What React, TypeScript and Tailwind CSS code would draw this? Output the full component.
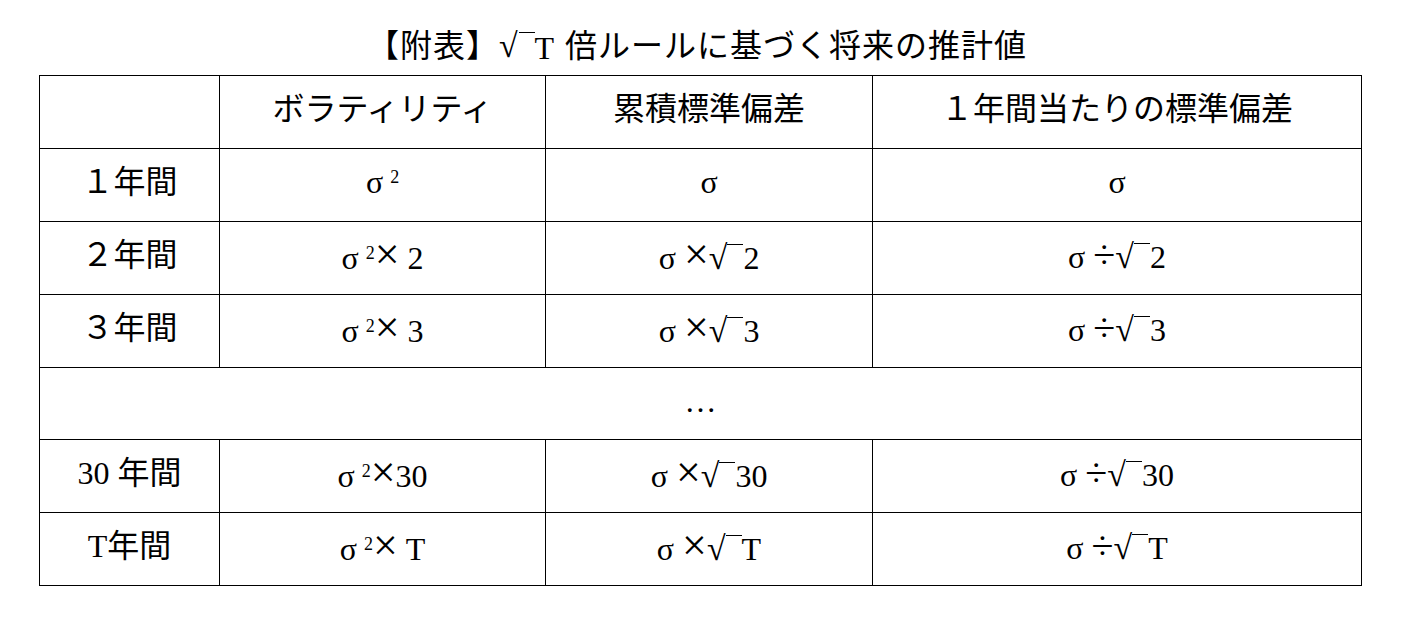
import React from "react";

const font = { fontFamily: '"Liberation Serif", "Noto Sans CJK JP", serif' };

function Sq({ children }: { children: React.ReactNode }) {
    return (
        <span className="inline-flex items-start">
            <span className="text-[34px] leading-[36px]">√</span>
            <span className="inline-block w-[16px] border-t-[1.5px] border-black mt-[4px] h-[20px]"></span>
            <span>{children}</span>
        </span>
    );
}

function S2() {
    return (
        <span>
            σ<span className="text-[18px] leading-none ml-[7px] align-[10px]">2</span>
        </span>
    );
}

// full-width looking operators
const Times = () => <span className="text-[44px] leading-none">×</span>;
const Div = () => <span className="text-[40px] leading-none">÷</span>;

const rows: { label: string; vol: React.ReactNode; cum: React.ReactNode; per: React.ReactNode }[] = [
    { label: "１年間", vol: <S2 />, cum: "σ", per: "σ" },
    { label: "２年間", vol: <><S2 /><Times /> 2</>, cum: <>σ <Times /><Sq>2</Sq></>, per: <>σ <Div /><Sq>2</Sq></> },
    { label: "３年間", vol: <><S2 /><Times /> 3</>, cum: <>σ <Times /><Sq>3</Sq></>, per: <>σ <Div /><Sq>3</Sq></> },
];

const rows2: typeof rows = [
    { label: "30 年間", vol: <><S2 /><Times />30</>, cum: <>σ <Times /><Sq>30</Sq></>, per: <>σ <Div /><Sq>30</Sq></> },
    { label: "T年間", vol: <><S2 /><Times /> T</>, cum: <>σ <Times /><Sq>T</Sq></>, per: <>σ <Div /><Sq>T</Sq></> },
];

export default function App() {
    const td = "border-[1.5px] border-black text-center align-middle pb-[6px]";
    const renderRow = (r: (typeof rows)[number], i: number) => (
        <tr key={i} className="h-[73px]">
            <td className={td}>{r.label}</td>
            <td className={td}>{r.vol}</td>
            <td className={td}>{r.cum}</td>
            <td className={td}>{r.per}</td>
        </tr>
    );

    return (
        <div className="w-[1408px] h-[622px] bg-white text-black pt-[26px]" style={font}>
            <h1 className="text-center text-[32px] leading-[40px] tracking-[1px] pr-[14px] mb-[7px]">
                【附表】<Sq><span className="mr-[10px]">T</span></Sq>倍ルールに基づく将来の推計値
            </h1>
            <table className="ml-[39px] w-[1322px] border-collapse table-fixed text-[32px] leading-[36px]">
                <colgroup>
                    <col className="w-[180px]" />
                    <col className="w-[326px]" />
                    <col className="w-[327px]" />
                    <col className="w-[489px]" />
                </colgroup>
                <tbody>
                    <tr className="h-[73px]">
                        <td className={td}></td>
                        <td className={td}>ボラティリティ</td>
                        <td className={td}>累積標準偏差</td>
                        <td className={td}>１年間当たりの標準偏差</td>
                    </tr>
                    {rows.map(renderRow)}
                    <tr className="h-[72px]">
                        <td colSpan={4} className={td}>…</td>
                    </tr>
                    {rows2.map(renderRow)}
                </tbody>
            </table>
        </div>
    );
}
